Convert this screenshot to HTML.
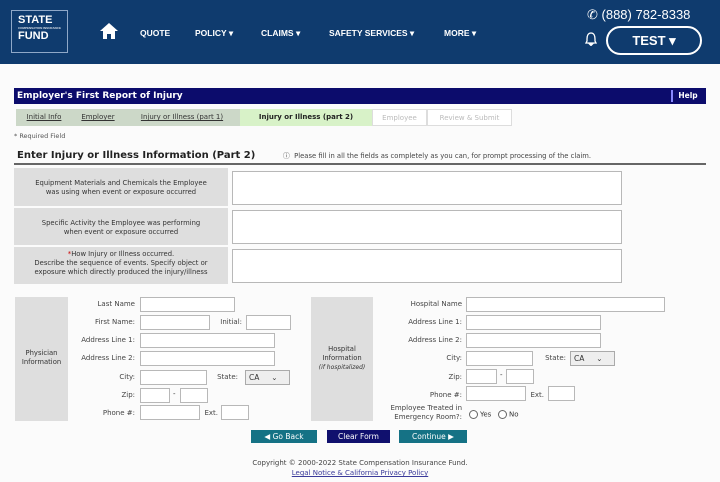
<!DOCTYPE html>
<html><head><meta charset="utf-8"><style>
*{margin:0;padding:0;box-sizing:border-box}
body{width:720px;height:482px;background:#fbfbfb;font-family:"DejaVu Sans","Liberation Sans",sans-serif;position:relative;overflow:hidden;color:#333}
.a{position:absolute}
.hdr{left:0;top:0;width:720px;height:64px;background:#0f3b6e}
.nav{color:#fff;font-size:8.5px;font-weight:bold;top:28px;font-family:"Liberation Sans",sans-serif}
.in{position:absolute;background:#fff;border:1px solid #b8b8b8;height:15px}
.lb{position:absolute;font-size:7px;color:#444;text-align:right;white-space:nowrap}
.gray{background:#dedede}
.tab{position:absolute;top:109px;height:17px;font-size:7px;line-height:17px;text-align:center;text-decoration:underline;color:#333;white-space:nowrap}
.btn{position:absolute;top:430px;height:13px;font-size:7.5px;color:#fff;text-align:center;line-height:13px}
.sel{position:absolute;background:#eee;border:1px solid #aaa;height:15px;font-size:7.5px;padding-left:3px;line-height:13px}
.rad{display:inline-block;width:9px;height:9px;border:1px solid #666;border-radius:50%;vertical-align:middle;margin-right:2px;background:#fff}
</style></head><body>
<div class="a hdr"></div>
<div class="a" style="left:11px;top:10px;width:57px;height:43px;border:1px solid #8fa8c8;color:#fff;font-weight:bold;font-size:11px;line-height:11px;padding:4px 0 0 6px;font-family:'Liberation Sans',sans-serif">STATE<div style="font-size:3px;line-height:5px;opacity:.8">COMPENSATION INSURANCE</div>FUND</div>
<svg class="a" style="left:99px;top:22px" width="20" height="18" viewBox="0 0 20 18"><path d="M10 1 L1 9 H4 V17 H8 V12 H12 V17 H16 V9 H19 Z" fill="#fff"/></svg>
<div class="a nav" style="left:140px">QUOTE</div>
<div class="a nav" style="left:195px">POLICY ▾</div>
<div class="a nav" style="left:261px">CLAIMS ▾</div>
<div class="a nav" style="left:329px">SAFETY SERVICES ▾</div>
<div class="a nav" style="left:444px">MORE ▾</div>
<div class="a" style="left:587px;top:7px;color:#fff;font-size:13px;font-family:'Liberation Sans',sans-serif">&#9990;&nbsp;(888) 782-8338</div>
<svg class="a" style="left:585px;top:32px" width="12" height="14" viewBox="0 0 12 14"><path d="M6 1 C3 1 2 4 2 7 V9 L1 11 H11 L10 9 V7 C10 4 9 1 6 1 Z M4.5 12 H7.5 L6 13.5 Z" fill="none" stroke="#fff" stroke-width="1.3"/></svg>
<div class="a" style="left:606px;top:26px;width:96px;height:29px;border:2px solid #fff;border-radius:15px;color:#fff;font-weight:bold;font-size:13px;text-align:center;line-height:25px;font-family:'Liberation Sans',sans-serif">TEST ▾</div>

<div class="a" style="left:14px;top:88px;width:692px;height:16px;background:#0c0c6c;color:#fff;font-weight:bold;font-size:9px;line-height:16px;padding-left:3px">Employer's First Report of Injury</div>
<div class="a" style="left:671px;top:90px;width:32px;height:12px;border-left:2px solid #8888ff;color:#fff;font-size:7.5px;font-weight:bold;line-height:12px;text-align:center">Help</div>
<div class="tab" style="left:16px;width:56px;background:#ccd8c8">Initial Info</div>
<div class="tab" style="left:72px;width:52px;background:#ccd8c8">Employer</div>
<div class="tab" style="left:124px;width:116px;background:#ccd8c8">Injury or Illness (part 1)</div>
<div class="tab" style="left:240px;width:132px;background:#d8f2c8;font-weight:bold;text-decoration:none;color:#222">Injury or Illness (part 2)</div>
<div class="tab" style="left:372px;width:55px;background:#fff;border:1px solid #ddd;color:#bbb;text-decoration:none">Employee</div>
<div class="tab" style="left:427px;width:85px;background:#fff;border:1px solid #ddd;color:#bbb;text-decoration:none">Review &amp; Submit</div>
<div class="a" style="left:14px;top:132px;font-size:6.5px;color:#555">* Required Field</div>
<div class="a" style="left:17px;top:150px;font-size:10px;font-weight:bold;color:#222">Enter Injury or Illness Information (Part 2)</div>
<div class="a" style="left:283px;top:150px;font-size:6.8px;color:#444;white-space:nowrap">&#9432;&nbsp;&nbsp;Please fill in all the fields as completely as you can, for prompt processing of the claim.</div>
<div class="a" style="left:14px;top:163px;width:692px;height:2px;background:#666"></div>

<div class="a gray" style="left:14px;top:168px;width:214px;height:38px;font-size:6.8px;text-align:center;padding-top:11px;line-height:9px">Equipment Materials and Chemicals the Employee<br>was using when event or exposure occurred</div>
<div class="in" style="left:232px;top:171px;width:390px;height:34px"></div>
<div class="a gray" style="left:14px;top:208px;width:214px;height:37px;font-size:6.8px;text-align:center;padding-top:11px;line-height:9px">Specific Activity the Employee was performing<br>when event or exposure occurred</div>
<div class="in" style="left:232px;top:210px;width:390px;height:34px"></div>
<div class="a gray" style="left:14px;top:247px;width:214px;height:37px;font-size:6.8px;text-align:center;padding-top:3px;line-height:9px"><span style="color:#c00">*</span>How Injury or Illness occurred.<br>Describe the sequence of events. Specify object or<br>exposure which directly produced the injury/illness</div>
<div class="in" style="left:232px;top:249px;width:390px;height:34px"></div>

<div class="a gray" style="left:15px;top:297px;width:53px;height:124px;font-size:6.8px;text-align:center;padding-top:52px;line-height:9px">Physician<br>Information</div>
<div class="lb" style="left:70px;top:300px;width:65px">Last Name</div><div class="in" style="left:140px;top:297px;width:95px"></div>
<div class="lb" style="left:70px;top:318px;width:65px">First Name:</div><div class="in" style="left:140px;top:315px;width:70px"></div>
<div class="lb" style="left:210px;top:318px;width:32px">Initial:</div><div class="in" style="left:246px;top:315px;width:45px"></div>
<div class="lb" style="left:60px;top:336px;width:75px">Address Line 1:</div><div class="in" style="left:140px;top:333px;width:135px"></div>
<div class="lb" style="left:60px;top:354px;width:75px">Address Line 2:</div><div class="in" style="left:140px;top:351px;width:135px"></div>
<div class="lb" style="left:70px;top:373px;width:65px">City:</div><div class="in" style="left:140px;top:370px;width:67px"></div>
<div class="lb" style="left:205px;top:373px;width:33px">State:</div><div class="sel" style="left:245px;top:370px;width:45px">CA&nbsp;&nbsp;&nbsp;&nbsp;&nbsp;⌄</div>
<div class="lb" style="left:70px;top:391px;width:65px">Zip:</div><div class="in" style="left:140px;top:388px;width:30px"></div><div class="a" style="left:173px;top:390px;font-size:7px">-</div><div class="in" style="left:180px;top:388px;width:28px"></div>
<div class="lb" style="left:70px;top:409px;width:65px">Phone #:</div><div class="in" style="left:140px;top:405px;width:60px"></div>
<div class="lb" style="left:200px;top:409px;width:18px">Ext.</div><div class="in" style="left:221px;top:405px;width:28px"></div>

<div class="a gray" style="left:311px;top:297px;width:62px;height:124px;font-size:6.8px;text-align:center;padding-top:48px;line-height:9px">Hospital<br>Information<br><i style="font-size:6px">(if hospitalized)</i></div>
<div class="lb" style="left:380px;top:300px;width:82px">Hospital Name</div><div class="in" style="left:466px;top:297px;width:199px"></div>
<div class="lb" style="left:380px;top:318px;width:82px">Address Line 1:</div><div class="in" style="left:466px;top:315px;width:135px"></div>
<div class="lb" style="left:380px;top:336px;width:82px">Address Line 2:</div><div class="in" style="left:466px;top:333px;width:135px"></div>
<div class="lb" style="left:380px;top:354px;width:82px">City:</div><div class="in" style="left:466px;top:351px;width:67px"></div>
<div class="lb" style="left:533px;top:354px;width:33px">State:</div><div class="sel" style="left:570px;top:351px;width:45px">CA&nbsp;&nbsp;&nbsp;&nbsp;&nbsp;⌄</div>
<div class="lb" style="left:380px;top:373px;width:82px">Zip:</div><div class="in" style="left:466px;top:369px;width:31px"></div><div class="a" style="left:500px;top:371px;font-size:7px">-</div><div class="in" style="left:506px;top:369px;width:28px"></div>
<div class="lb" style="left:380px;top:391px;width:82px">Phone #:</div><div class="in" style="left:466px;top:386px;width:60px"></div>
<div class="lb" style="left:526px;top:391px;width:18px">Ext.</div><div class="in" style="left:548px;top:386px;width:27px"></div>
<div class="lb" style="left:370px;top:404px;width:92px;line-height:9px">Employee Treated in<br>Emergency Room?:</div>
<div class="a" style="left:469px;top:410px;font-size:7px"><span class="rad"></span>Yes&nbsp;&nbsp;&nbsp;<span class="rad"></span>No</div>

<div class="btn" style="left:251px;width:66px;background:#157285">◀ Go Back</div>
<div class="btn" style="left:327px;width:63px;background:#10106e">Clear Form</div>
<div class="btn" style="left:399px;width:68px;background:#157285">Continue ▶</div>
<div class="a" style="left:0;top:459px;width:720px;text-align:center;font-size:7px;color:#444">Copyright © 2000-2022 State Compensation Insurance Fund.</div>
<div class="a" style="left:0;top:469px;width:720px;text-align:center;font-size:7px;color:#3a3a9a;text-decoration:underline">Legal Notice &amp; California Privacy Policy</div>
</body></html>
